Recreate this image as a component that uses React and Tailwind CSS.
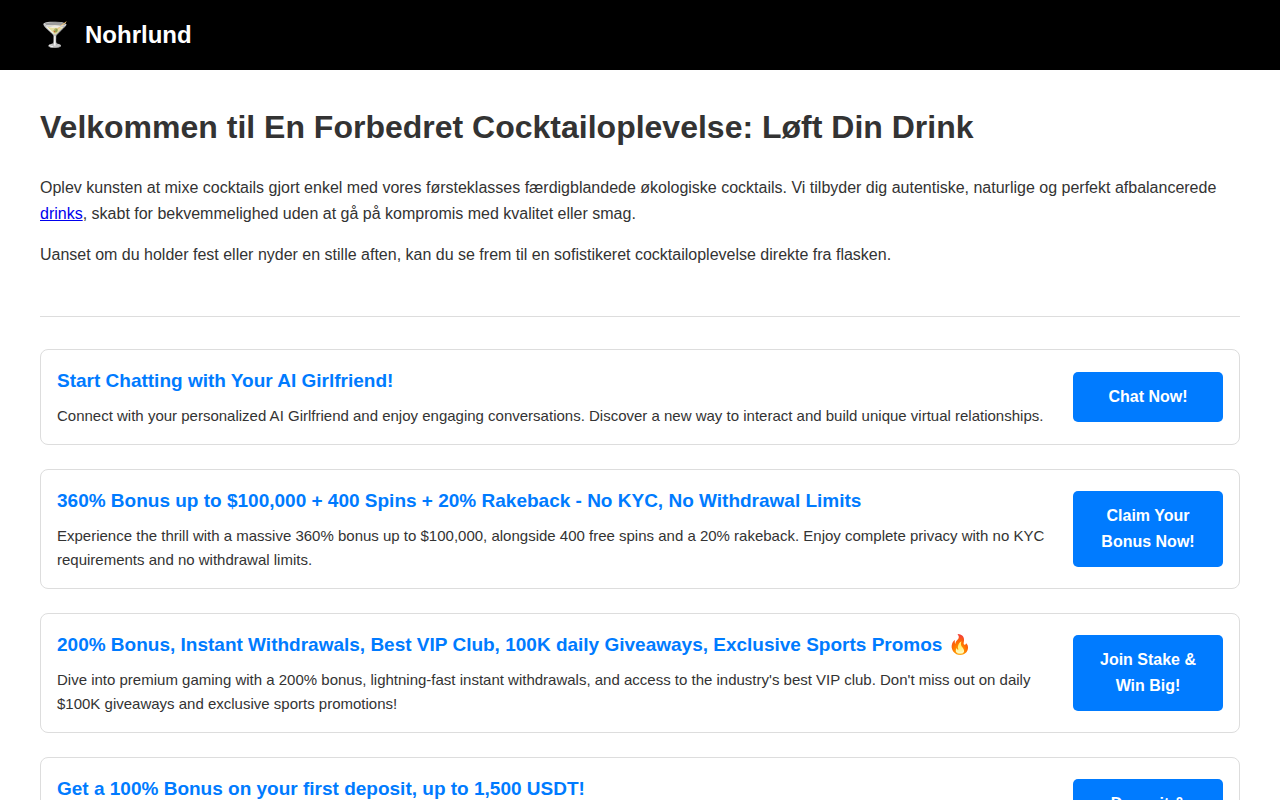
const offers = [
  {
    title: "Start Chatting with Your AI Girlfriend!",
    text: "Connect with your personalized AI Girlfriend and enjoy engaging conversations. Discover a new way to interact and build unique virtual relationships.",
    action: "Chat Now!",
  },
  {
    title:
      "360% Bonus up to $100,000 + 400 Spins + 20% Rakeback - No KYC, No Withdrawal Limits",
    text: "Experience the thrill with a massive 360% bonus up to $100,000, alongside 400 free spins and a 20% rakeback. Enjoy complete privacy with no KYC requirements and no withdrawal limits.",
    action: "Claim Your Bonus Now!",
  },
  {
    title:
      "200% Bonus, Instant Withdrawals, Best VIP Club, 100K daily Giveaways, Exclusive Sports Promos 🔥",
    text: "Dive into premium gaming with a 200% bonus, lightning-fast instant withdrawals, and access to the industry's best VIP club. Don't miss out on daily $100K giveaways and exclusive sports promotions!",
    action: "Join Stake & Win Big!",
  },
  {
    title: "Get a 100% Bonus on your first deposit, up to 1,500 USDT!",
    text: "Kickstart your play with a 100% bonus on your first deposit, up to 1,500 USDT. Enjoy fast payouts, a wide selection of games and rewards for every player who signs up today.",
    action: "Deposit & Play Now!",
  },
];

function Header() {
  return (
    <header className="bg-black px-10 py-4 text-white">
      <a
        href="#"
        className="flex items-center gap-[15px] text-2xl leading-[38px] font-bold"
      >
        <span>🍸</span>
        Nohrlund
      </a>
    </header>
  );
}

function OfferCard({ title, text, action }) {
  return (
    <article className="flex items-center justify-between gap-4 rounded-lg border border-[#dddddd] p-4">
      <div className="flex-1">
        <h3 className="mb-2 text-[19px] leading-[30px] font-bold text-[#007bff]">
          {title}
        </h3>
        <p className="text-[15px] leading-6">{text}</p>
      </div>
      <a
        href="#"
        className="w-[150px] shrink-0 rounded-[5px] bg-[#007bff] px-5 py-3 text-center leading-[26px] font-bold text-white"
      >
        {action}
      </a>
    </article>
  );
}

export default function App() {
  return (
    <div className="bg-white font-['Liberation_Sans',Arial,sans-serif] text-base leading-[26px] text-[#333333]">
      <Header />
      <main className="px-10 py-8">
        <section className="border-b border-[#dddddd] pb-12">
          <h1 className="mb-[22px] text-[32px] leading-[51px] font-bold">
            Velkommen til En Forbedret Cocktailoplevelse: Løft Din Drink
          </h1>
          <p className="mb-[15px]">
            Oplev kunsten at mixe cocktails gjort enkel med vores førsteklasses
            færdigblandede økologiske cocktails. Vi tilbyder dig autentiske,
            naturlige og perfekt afbalancerede{" "}
            <a href="#" className="text-[#0000ee] underline">
              drinks
            </a>
            , skabt for bekvemmelighed uden at gå på kompromis med kvalitet
            eller smag.
          </p>
          <p>
            Uanset om du holder fest eller nyder en stille aften, kan du se frem
            til en sofistikeret cocktailoplevelse direkte fra flasken.
          </p>
        </section>
        <section className="mt-8 space-y-6">
          {offers.map((offer) => (
            <OfferCard key={offer.title} {...offer} />
          ))}
        </section>
      </main>
    </div>
  );
}
